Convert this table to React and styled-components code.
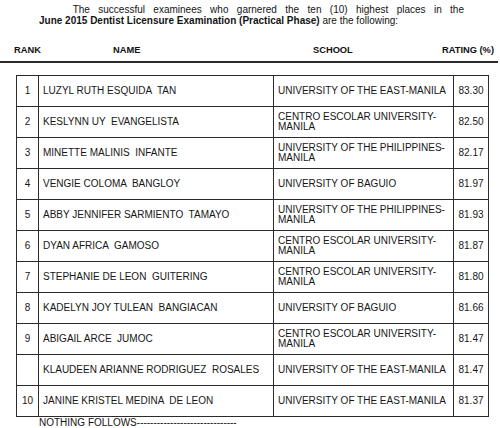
import React from "react";
import styled, { createGlobalStyle } from "styled-components";

const Global = createGlobalStyle`
  html, body { margin: 0; padding: 0; background: #ffffff; }
  body { font-family: "Liberation Sans", Arial, sans-serif; color: #141414; }
`;

const Page = styled.div`
  width: 500px;
  height: 428px;
  overflow: hidden;
  padding-top: 3.5px;
  box-sizing: border-box;
`;

const Intro = styled.div`
  margin-left: 39px;
  width: 425px;
  font-size: 10px;
  line-height: 11.5px;
`;

const IntroLine = styled.div`
  text-align: ${(p) => (p.$justify ? "justify" : "left")};
  text-align-last: ${(p) => (p.$justify ? "justify" : "auto")};
  padding-left: ${(p) => (p.$indent ? "33.7px" : "0")};
  white-space: nowrap;
  word-spacing: ${(p) => (p.$justify ? "0" : "0")};
`;

const Bold = styled.b`
  font-weight: 700;
`;

const HeaderRow = styled.div`
  margin-top: 17px;
  width: 498px;
  display: grid;
  grid-template-columns: 99px 200px 1fr auto;
  padding: 0 4px 5.5px 14px;
  box-sizing: border-box;
  border-bottom: 2px solid #2a2a2a;
  font-size: 9.3px;
  font-weight: 700;
  line-height: 12px;
  color: #111;
`;

const HeadCell = styled.div``;

const Table = styled.div`
  margin: 12px 0 0 16px;
  width: 473px;
  display: grid;
  grid-template-columns: 22px 235px 180px 35px;
  grid-auto-rows: 31px;
  border-left: 1px solid #2b2b2b;
  border-top: 1px solid #2b2b2b;
  box-sizing: border-box;
`;

const Cell = styled.div`
  box-sizing: border-box;
  border-right: 1px solid #2b2b2b;
  border-bottom: 1px solid #2b2b2b;
  display: flex;
  align-items: center;
  justify-content: ${(p) => (p.$center ? "center" : "flex-start")};
  padding-left: ${(p) => (p.$center ? "0" : "4px")};
  font-size: 10px;
  line-height: 10.3px;
  white-space: pre;
  color: #161616;
`;

const Footer = styled.div`
  margin-left: 39px;
  font-size: 10px;
  line-height: 11px;
  white-space: nowrap;
`;

const rows = [
  ["1", "LUZYL RUTH ESQUIDA  TAN", "UNIVERSITY OF THE EAST-MANILA", "83.30"],
  ["2", "KESLYNN UY  EVANGELISTA", "CENTRO ESCOLAR UNIVERSITY-\nMANILA", "82.50"],
  ["3", "MINETTE MALINIS  INFANTE", "UNIVERSITY OF THE PHILIPPINES-\nMANILA", "82.17"],
  ["4", "VENGIE COLOMA  BANGLOY", "UNIVERSITY OF BAGUIO", "81.97"],
  ["5", "ABBY JENNIFER SARMIENTO  TAMAYO", "UNIVERSITY OF THE PHILIPPINES-\nMANILA", "81.93"],
  ["6", "DYAN AFRICA  GAMOSO", "CENTRO ESCOLAR UNIVERSITY-\nMANILA", "81.87"],
  ["7", "STEPHANIE DE LEON  GUITERING", "CENTRO ESCOLAR UNIVERSITY-\nMANILA", "81.80"],
  ["8", "KADELYN JOY TULEAN  BANGIACAN", "UNIVERSITY OF BAGUIO", "81.66"],
  ["9", "ABIGAIL ARCE  JUMOC", "CENTRO ESCOLAR UNIVERSITY-\nMANILA", "81.47"],
  ["", "KLAUDEEN ARIANNE RODRIGUEZ  ROSALES", "UNIVERSITY OF THE EAST-MANILA", "81.47"],
  ["10", "JANINE KRISTEL MEDINA  DE LEON", "UNIVERSITY OF THE EAST-MANILA", "81.37"],
];

export default function App() {
  return (
    <Page>
      <Global />
      <Intro>
        <IntroLine $justify $indent>
          The successful examinees who garnered the ten (10) highest places in the
        </IntroLine>
        <IntroLine>
          <Bold>June 2015 Dentist Licensure Examination (Practical Phase)</Bold> are the following:
        </IntroLine>
      </Intro>
      <HeaderRow>
        <HeadCell>RANK</HeadCell>
        <HeadCell>NAME</HeadCell>
        <HeadCell>SCHOOL</HeadCell>
        <HeadCell>RATING (%)</HeadCell>
      </HeaderRow>
      <Table>
        {rows.map((r, i) => (
          <React.Fragment key={i}>
            <Cell $center>{r[0]}</Cell>
            <Cell>{r[1]}</Cell>
            <Cell>{r[2]}</Cell>
            <Cell $center>{r[3]}</Cell>
          </React.Fragment>
        ))}
      </Table>
      <Footer>NOTHING FOLLOWS{"-".repeat(30)}</Footer>
    </Page>
  );
}
